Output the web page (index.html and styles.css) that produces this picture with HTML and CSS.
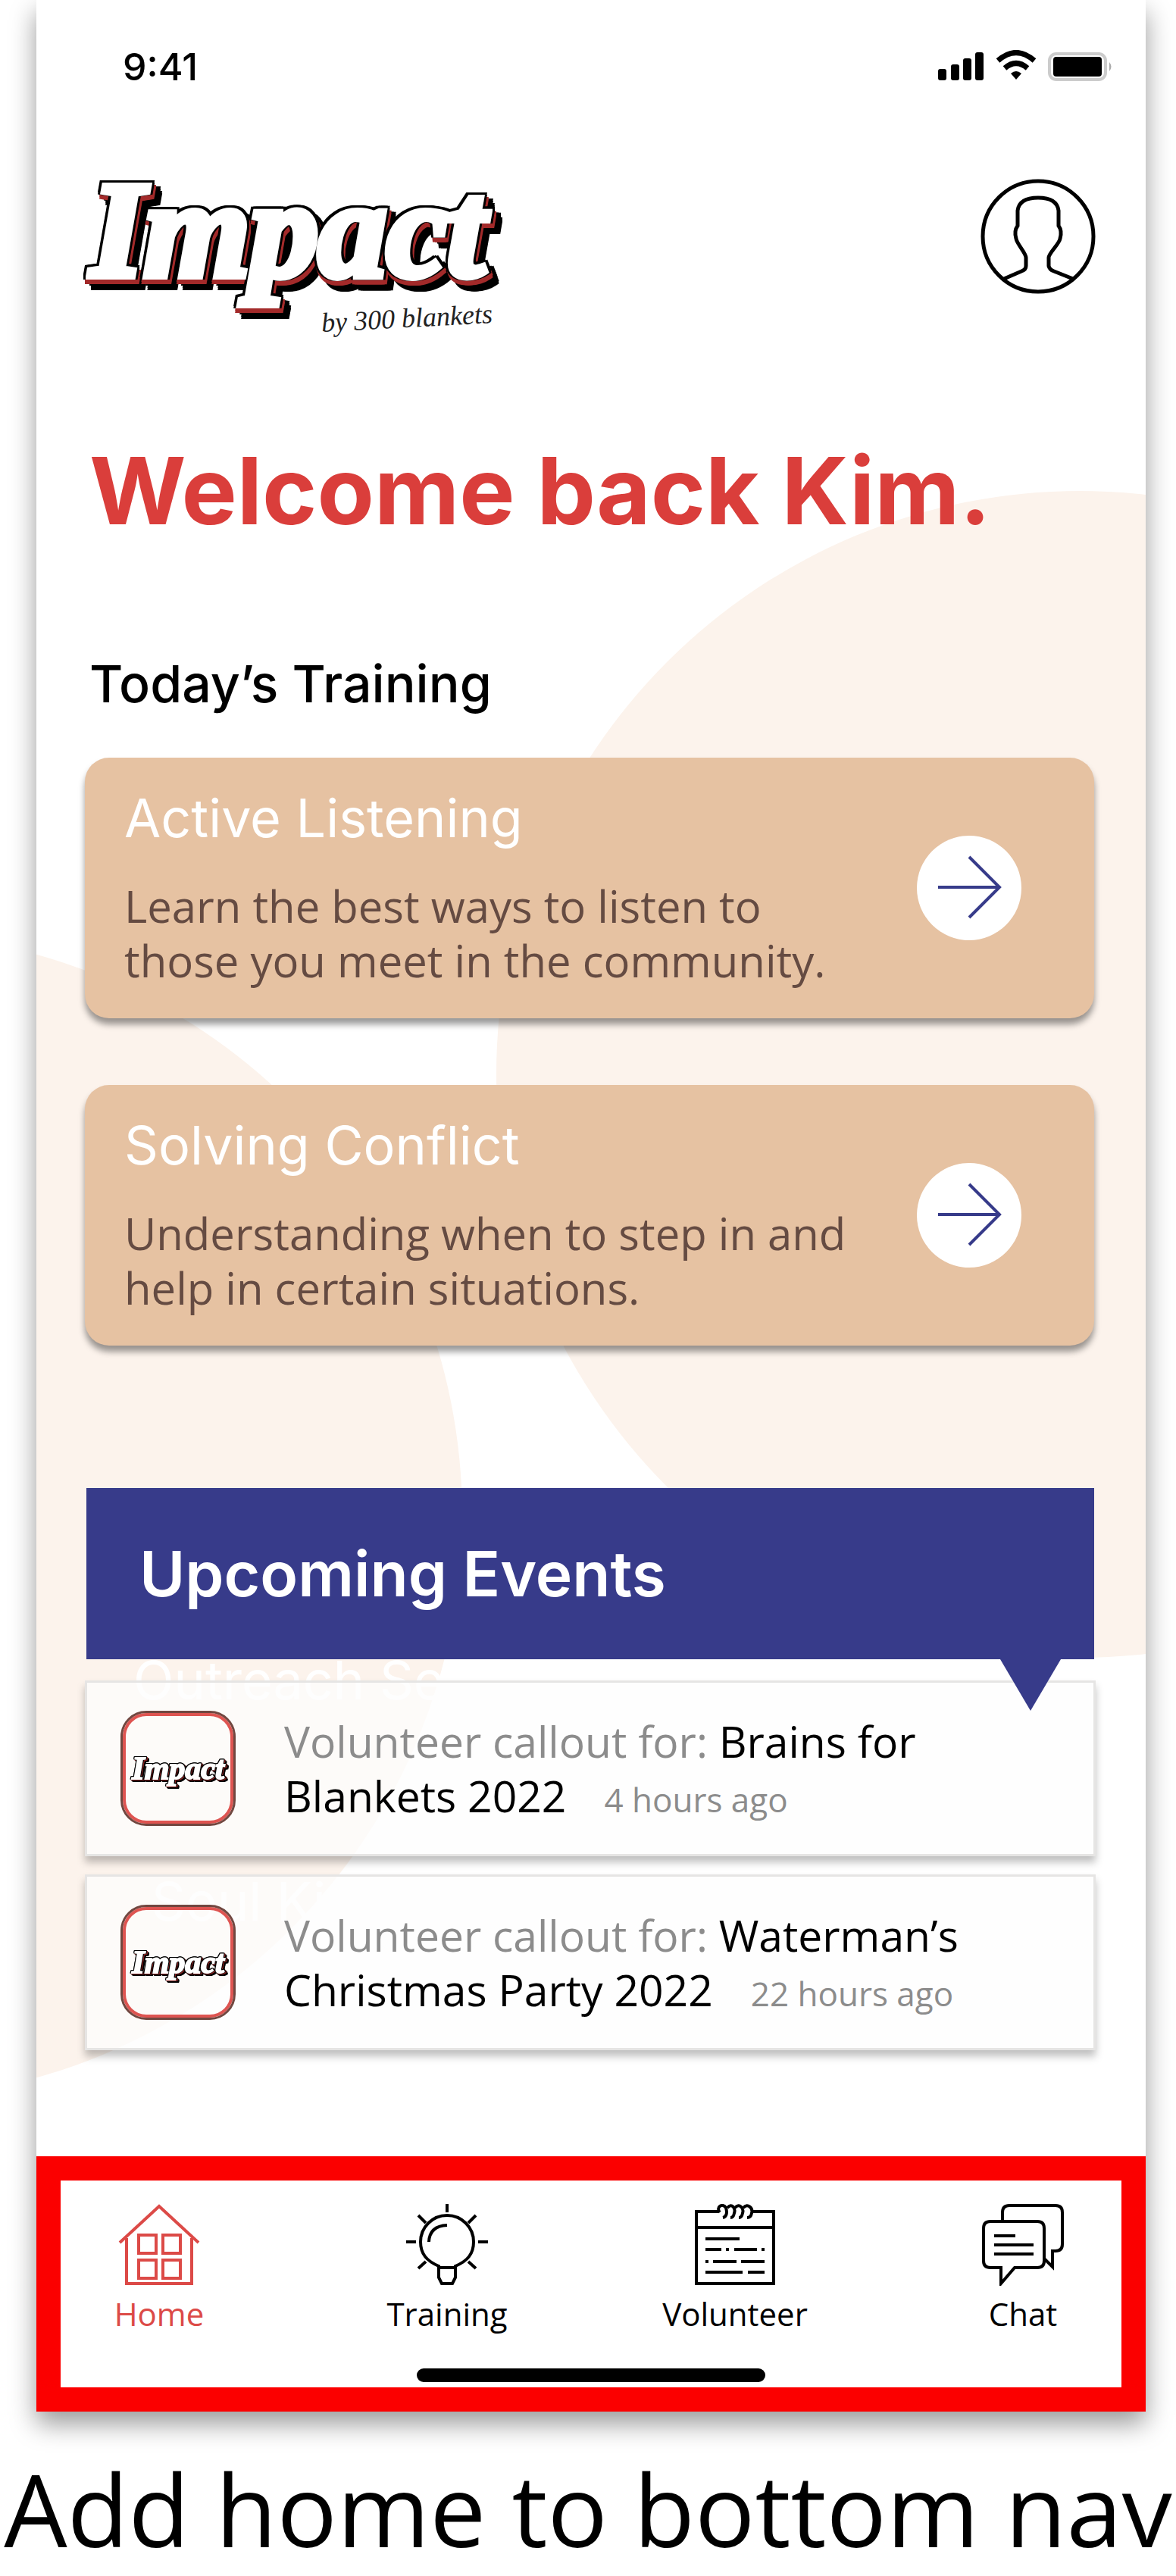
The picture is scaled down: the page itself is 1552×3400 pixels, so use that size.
FILE: index.html
```html
<!DOCTYPE html>
<html lang="en">
<head>
<meta charset="utf-8">
<meta name="viewport" content="width=device-width, initial-scale=1">
<title>Impact by 300 Blankets</title>
<link rel="stylesheet" href="styles.css">
</head>
<body>
<main class="phone">
  <div class="backdrop" aria-hidden="true">
    <div class="circle circle-right"></div>
    <div class="circle circle-left"></div>
    <span class="ghost ghost-first">Outreach Se</span>
    <span class="ghost ghost-second">Soul Ki</span>
  </div>

  <div class="status">
    <span class="time">9:41</span>
    <svg class="status-icons" viewBox="0 0 230 44" aria-hidden="true">
      <rect x="0" y="25" width="11" height="15" rx="3"/>
      <rect x="17" y="19" width="11" height="21" rx="3"/>
      <rect x="33" y="11" width="11" height="29" rx="3"/>
      <rect x="49" y="3" width="11" height="37" rx="3"/>
      <g fill="none" stroke="#000" stroke-width="7">
        <path d="M79 14Q103-7 127 14"/>
        <path d="M88 24Q103 11 118 24"/>
      </g>
      <path d="M96 31Q103 25 110 31L103 39z"/>
      <rect x="147" y="5" width="74" height="34" rx="9" fill="none" stroke="#ccc" stroke-width="4"/>
      <rect x="152" y="9" width="64" height="26" rx="4"/>
      <path d="M226 16q5 6 0 12z" fill="#aaa"/>
    </svg>
  </div>

  <header class="top">
    <div class="brand">
      <span class="logo">Impact</span>
      <span class="byline">by 300 blankets</span>
    </div>
    <button class="profile" type="button" aria-label="Profile">
      <svg viewBox="0 0 152 152" aria-hidden="true">
        <circle cx="76" cy="76" r="73"/>
        <path d="M31 132L54 122Q60 120 60 115V104C60 98 48 86 47 79C45 72 46 66 49 62V42Q51 25 76 25T103 42V62C106 66 107 72 105 79C104 86 90 98 90 104V115Q91 120 97 122L122 132"/>
      </svg>
    </button>
  </header>

  <h1 class="welcome">Welcome back Kim.</h1>

  <section class="trainings">
    <h2 class="section-title">Today’s Training</h2>
    <article class="training">
      <div class="training-text">
        <h3>Active Listening</h3>
        <p>Learn the best ways to listen to<br>those you meet in the community.</p>
      </div>
      <a class="go" href="#" aria-label="Open Active Listening">
        <svg viewBox="0 0 138 138" aria-hidden="true"><path d="M28 68H109M69 28L109 68L69 108"/></svg>
      </a>
    </article>
    <article class="training">
      <div class="training-text">
        <h3>Solving Conflict</h3>
        <p>Understanding when to step in and<br>help in certain situations.</p>
      </div>
      <a class="go" href="#" aria-label="Open Solving Conflict">
        <svg viewBox="0 0 138 138" aria-hidden="true"><path d="M28 68H109M69 28L109 68L69 108"/></svg>
      </a>
    </article>
  </section>

  <section class="events">
    <h2 class="events-title">Upcoming Events</h2>
    <article class="event">
      <div class="tile"><span class="logo logo-small">Impact</span></div>
      <p>Volunteer callout for: <b>Brains for<br>Blankets 2022</b><time>4 hours ago</time></p>
    </article>
    <article class="event">
      <div class="tile"><span class="logo logo-small">Impact</span></div>
      <p>Volunteer callout for: <b>Waterman’s<br>Christmas Party 2022</b><time>22 hours ago</time></p>
    </article>
  </section>

  <footer class="bottom">
    <nav class="tabs">
      <a class="tab active" href="#">
        <svg viewBox="0 0 108 108" aria-hidden="true"><path d="M2 51L54 3L106 51M11 45V105H97V45M27 41H50V65H27zM59 41H82V65H59zM27 74H50V98H27zM59 74H82V98H59z"/></svg>
        Home
      </a>
      <a class="tab" href="#">
        <svg viewBox="0 0 108 108" aria-hidden="true"><path d="M54 0V11M16 15L26 25M92 15L82 25M0 50H13M95 50H108M16 85L26 76M92 85L82 76M43 82C27 75 19 66 19 50A35 35 0 0 1 89 50C89 66 81 75 65 82V97L61 105H47L43 97zM43 84H65M30 50Q31 29 54 28"/></svg>
        Training
      </a>
      <a class="tab" href="#">
        <svg viewBox="0 0 108 108" aria-hidden="true"><path d="M32 10H3V105H105V10H78M3 31H105"/><path d="M34 11C28 4 38-2 42 5C44 11 43 17 38 18M44 5C50-2 55 6 53 12Q52 18 48 18M54 5C60-2 66 6 64 12Q63 18 59 18M65 5C71-2 78 6 76 12Q75 18 70 18M15 46H60M15 60H36M42 60H46M53 60H83M89 60H93M15 76H19M25 76H56M62 76H93M15 90H64M71 90H93"/></svg>
        Volunteer
      </a>
      <a class="tab" href="#">
        <svg viewBox="0 0 108 108" aria-hidden="true"><path d="M27 22V11Q27 2 36 2H97Q106 2 106 11V53Q106 62 97 62H93V83L82 72M11 23H73Q82 23 82 32V75Q82 84 73 84H43L25 105V84H11Q2 84 2 75V32Q2 23 11 23zM16 42H44M16 54H68M16 66H68"/></svg>
        Chat
      </a>
    </nav>
    <div class="home-bar"></div>
  </footer>
</main>
<p class="caption">Add home to bottom nav</p>
</body>
</html>
```

FILE: styles.css
```css
* {
  box-sizing: border-box;
}

body {
  margin: 0;
  background: #fff;
  color: #000;
  font-family: "Open Sans", "Noto Sans", sans-serif;
}

h1, h2, h3, p {
  margin: 0;
}

.phone {
  position: relative;
  margin: 0 40px 0 48px;
  background: #fff;
  box-shadow: 0 16px 32px rgba(0, 0, 0, 0.4);
}

.phone > :not(.backdrop) {
  position: relative;
}

/* Soft circles and faded titles behind the content */
.backdrop {
  position: absolute;
  inset: 0;
  overflow: hidden;
}

.circle {
  position: absolute;
  width: 1540px;
  height: 1540px;
  border-radius: 50%;
  background: #fcf3ec;
}

.circle-right {
  top: 648px;
  right: -683px;
}

.circle-left {
  top: 1231px;
  left: -978px;
}

.ghost {
  position: absolute;
  color: #fff;
  font: 400 70px/80px Inter, sans-serif;
}

.ghost-first {
  top: 2178px;
  left: 128px;
}

.ghost-second {
  top: 2470px;
  left: 152px;
}

.status {
  display: flex;
  justify-content: space-between;
  align-items: center;
  padding: 56px 44px 0 114px;
}

.time {
  font: 500 50px/64px Inter, sans-serif;
}

.status-icons {
  width: 230px;
  height: 44px;
}

.top {
  display: flex;
  justify-content: space-between;
  align-items: flex-start;
  height: 220px;
  margin-top: 116px;
  padding: 0 66px 0 64px;
}

.brand {
  display: flex;
  flex-direction: column;
  width: 552px;
}

.logo {
  padding-left: 8px;
  color: #fff;
  font: italic 700 180px/136px "Liberation Serif", serif;
  -webkit-text-stroke: 10px #fff;
  paint-order: stroke fill;
  filter: drop-shadow(3px 0 0 #000) drop-shadow(-3px 0 0 #000) drop-shadow(0 -3px 0 #000) drop-shadow(2px 6px 0 #a32a2a) drop-shadow(8px 8px 0 #000);
}

.logo-small {
  padding: 0;
  font-size: 42px;
  line-height: 48px;
  -webkit-text-stroke-width: 2px;
  filter: drop-shadow(1px 0 0 #000) drop-shadow(-1px 0 0 #000) drop-shadow(0 -1px 0 #000) drop-shadow(1px 1px 0 #8a2020) drop-shadow(2px 2px 0 #000);
}

.byline {
  align-self: flex-end;
  margin: 24px 14px 0 0;
  color: #222;
  font: italic 400 36px/48px "Liberation Serif", serif;
  transform: rotate(-3deg);
}

.profile {
  width: 152px;
  height: 152px;
  padding: 0;
  border: 0;
  background: none;
}

.profile svg {
  display: block;
  fill: none;
  stroke: #000;
  stroke-width: 5px;
}

.welcome {
  margin-top: 112px;
  padding-left: 70px;
  color: #da3e3b;
  font: 700 123px/160px Inter, sans-serif;
  white-space: nowrap;
}

.trainings {
  display: flex;
  flex-direction: column;
  gap: 88px;
  padding: 134px 68px 0 64px;
}

.section-title {
  margin-bottom: -30px;
  padding-left: 6px;
  font: 500 68px/80px Inter, sans-serif;
}

.training {
  display: flex;
  justify-content: space-between;
  align-items: center;
  padding: 40px 96px 40px 52px;
  border-radius: 32px;
  background: #e6c2a2;
  box-shadow: 0 8px 8px rgba(0, 0, 0, 0.4);
}

.training h3 {
  margin-bottom: 40px;
  color: #fff;
  font: 400 70px/80px Inter, sans-serif;
}

.training p {
  color: #654b42;
  font-size: 58px;
  line-height: 72px;
  white-space: nowrap;
}

.go {
  flex: none;
  width: 138px;
  height: 138px;
  border-radius: 50%;
  background: #fff;
}

.go svg {
  display: block;
  fill: none;
  stroke: #373b8a;
  stroke-width: 4px;
}

.events {
  display: flex;
  flex-direction: column;
  gap: 24px;
  padding: 188px 66px 140px 64px;
}

.events-title {
  position: relative;
  z-index: 1;
  margin: 0 2px 4px;
  padding: 66px 70px 64px;
  background: #373b8a;
  color: #fff;
  font: 600 82px/96px Inter, sans-serif;
}

/* Pointer hanging from the banner */
.events-title::after {
  content: "";
  position: absolute;
  top: 100%;
  right: 44px;
  border: solid transparent;
  border-width: 68px 40px 0;
  border-top-color: #373b8a;
}

.event {
  display: flex;
  align-items: center;
  gap: 64px;
  min-height: 232px;
  padding: 0 44px;
  border: 3px solid #e6e5e4;
  background: rgba(253, 253, 253, 0.75);
  box-shadow: 0 8px 10px rgba(0, 0, 0, 0.25);
}

.tile {
  display: flex;
  flex: none;
  justify-content: center;
  align-items: center;
  width: 152px;
  height: 152px;
  border: 3px solid #714740;
  border-radius: 34px;
  box-shadow: inset 0 0 0 4px #de5451;
}

.event p {
  padding-top: 4px;
  color: #8c8c8c;
  font-size: 57px;
  line-height: 72px;
  white-space: nowrap;
}

.event b {
  color: #000;
  font-weight: 400;
}

.event time {
  margin-left: 50px;
  font-size: 44px;
}

.bottom {
  padding: 31px 30px 7px;
  border: 32px solid #fb0000;
  background: #fff;
}

.tabs {
  display: flex;
  justify-content: space-between;
}

.tab {
  display: flex;
  flex-direction: column;
  align-items: center;
  gap: 9px;
  width: 200px;
  color: #000;
  font-size: 42px;
  line-height: 56px;
  text-decoration: none;
}

.tab svg {
  width: 108px;
  height: 108px;
  fill: none;
  stroke: currentColor;
  stroke-width: 4px;
}

.active {
  color: #dc4a47;
}

.home-bar {
  width: 460px;
  height: 18px;
  margin: 44px auto 0;
  border-radius: 9px;
  background: #000;
}

.caption {
  padding: 48px 0 8px;
  font-size: 132px;
  line-height: 160px;
  text-align: center;
  white-space: nowrap;
}
```
